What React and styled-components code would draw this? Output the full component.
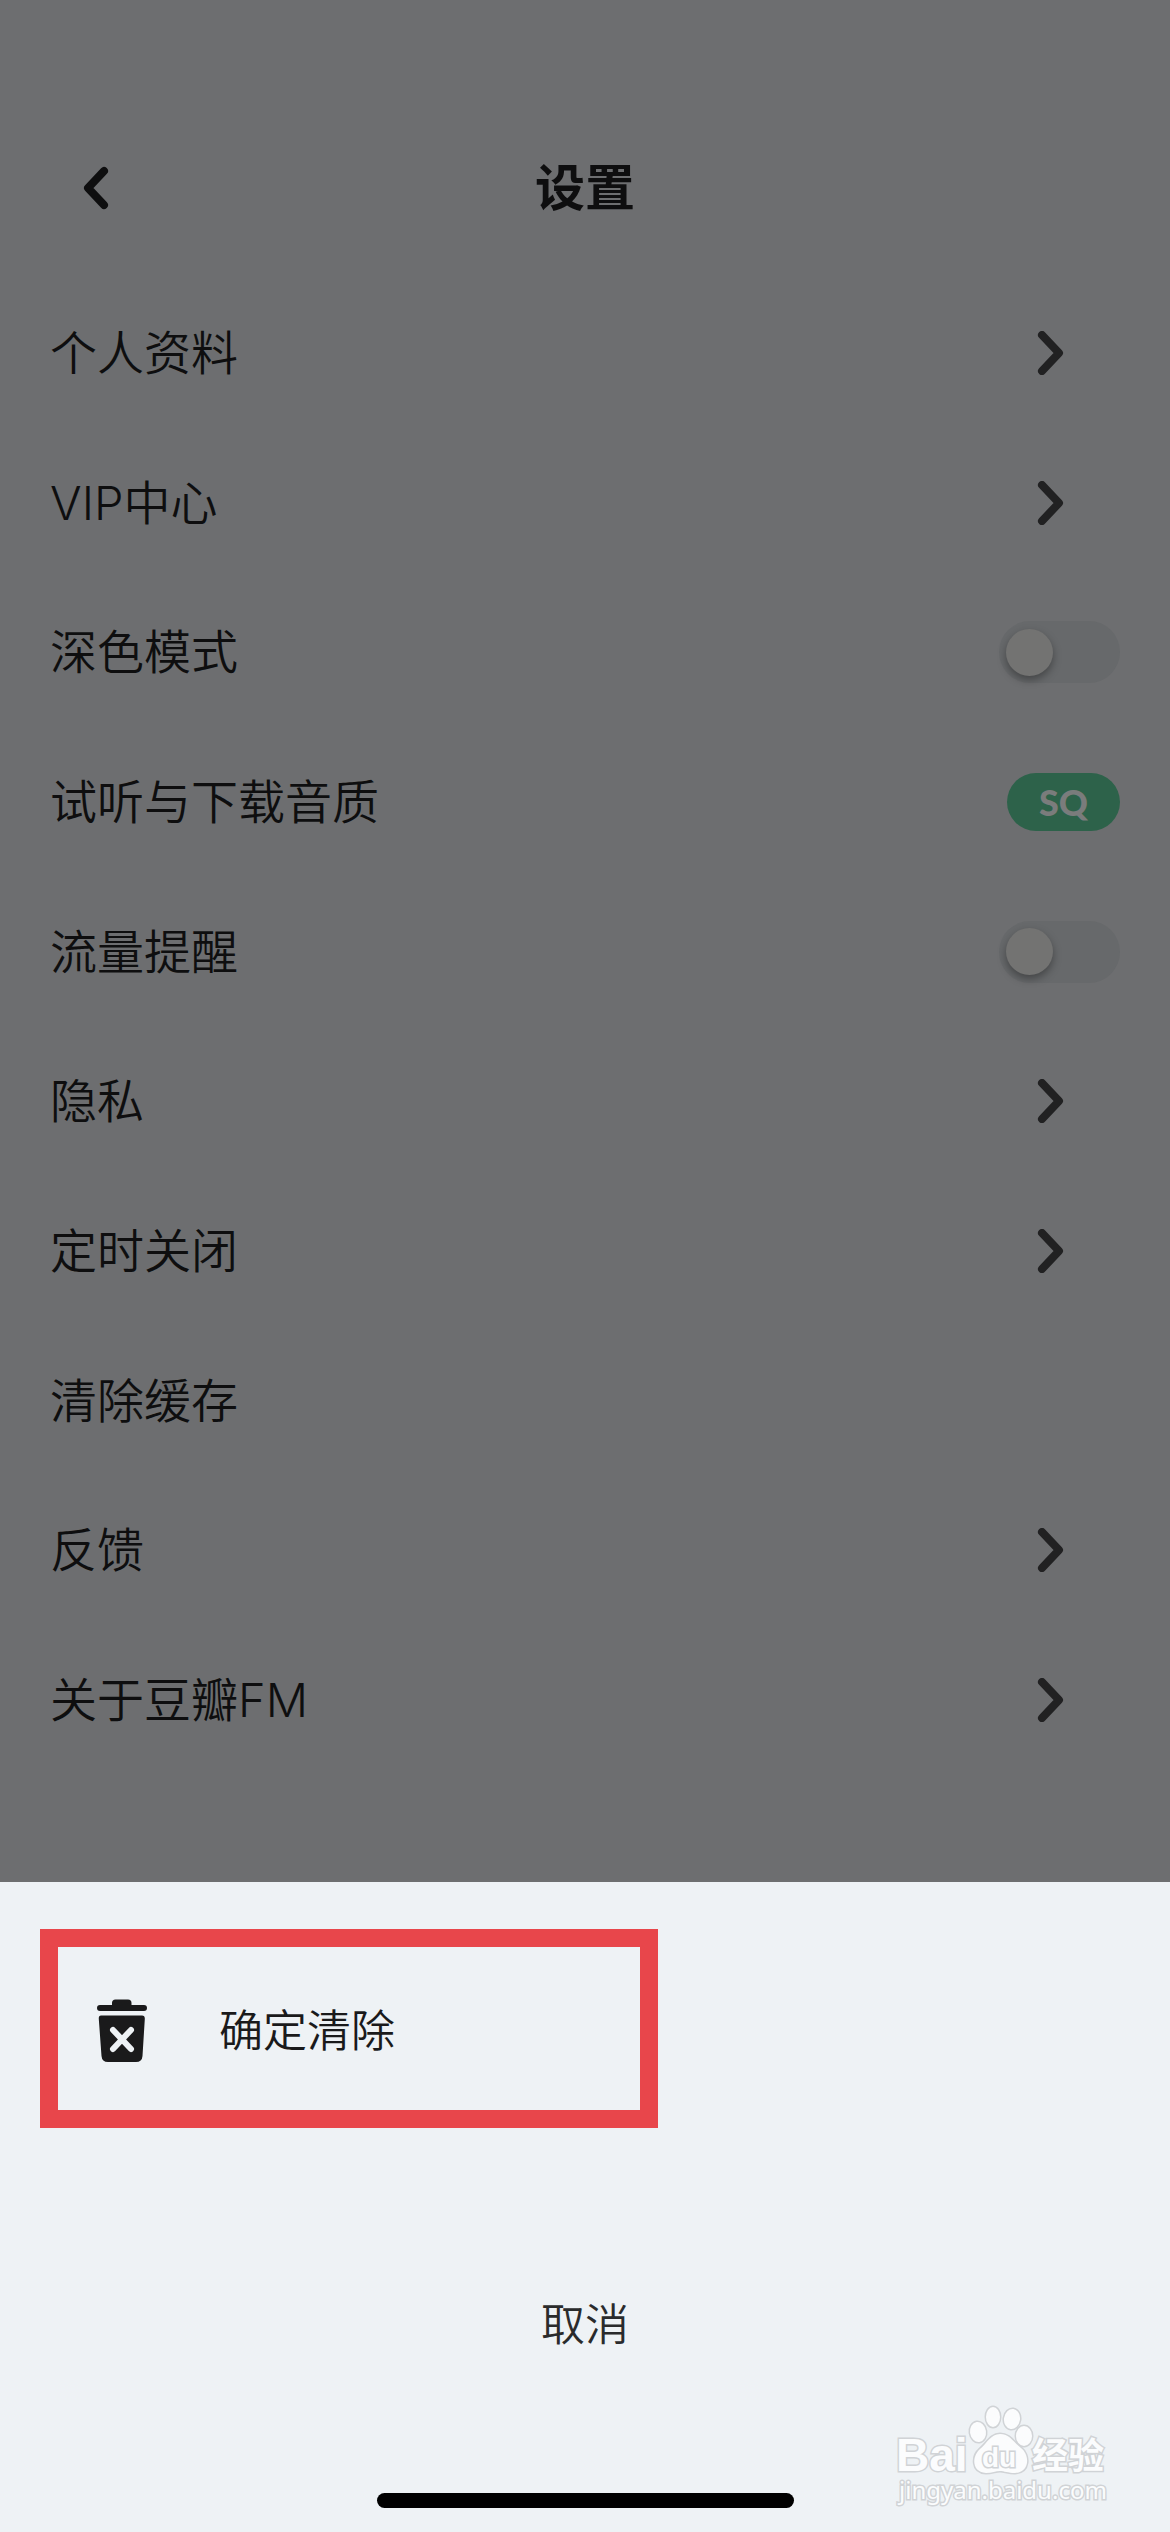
import React from "react";
import styled, { createGlobalStyle } from "styled-components";

const GlobalStyle = createGlobalStyle`
  *, *::before, *::after { box-sizing: border-box; }
  body {
    margin: 0;
    background: #eef2f5;
    font-family: Inter, "Noto Sans CJK SC", sans-serif;
    font-weight: 350;
  }
  button, input { font: inherit; color: inherit; }
`;

const Screen = styled.div`
  display: flex;
  flex-direction: column;
  min-height: 100vh;
`;

const Settings = styled.main`
  flex: 1;
  display: flex;
  flex-direction: column;
  padding: 98px 50px 107px;
  background: #6d6e70;
  color: #0e0e0f;
`;

const Header = styled.header`
  display: grid;
  grid-template-columns: 92px 1fr 92px;
  align-items: center;
  height: 180px;
`;

const PlainButton = styled.button`
  display: flex;
  align-items: center;
  padding: 0;
  border: 0;
  background: none;
  text-align: left;
  cursor: pointer;
`;

const BackButton = styled(PlainButton)`
  justify-content: center;
  height: 92px;
`;

const Title = styled.h1`
  margin: 0;
  text-align: center;
  font-size: 50px;
  font-weight: 600;
  line-height: 72px;
`;

const List = styled.ul`
  flex: 1;
  display: flex;
  flex-direction: column;
  margin: 0;
  padding: 0;
  list-style: none;
`;

const Item = styled.li`
  flex: 1;
  display: flex;
  min-height: 120px;
  font-size: 47px;
  line-height: 68px;
`;

const RowButton = styled(PlainButton)`
  flex: 1;
  justify-content: space-between;
  padding-right: ${(p) => (p.$inset ? "56px" : "0")};
`;

const RowLabel = styled.label`
  flex: 1;
  display: flex;
  align-items: center;
  justify-content: space-between;
  cursor: pointer;
`;

const Switch = styled.input`
  appearance: none;
  display: flex;
  align-items: center;
  width: 121px;
  height: 62px;
  margin: 0;
  padding: 0 7px;
  border-radius: 31px;
  background: #67696b;
  cursor: pointer;

  &::before {
    content: "";
    width: 47px;
    height: 47px;
    border-radius: 50%;
    background: #737372;
    box-shadow: 0 4px 8px rgba(0, 0, 0, 0.35);
  }

  &:checked {
    justify-content: flex-end;
    background: #2e6149;
  }
`;

const Badge = styled.span`
  display: flex;
  align-items: center;
  justify-content: center;
  width: 113px;
  height: 58px;
  border-radius: 29px;
  background: #2d624a;
  color: #7a7c7c;
  font-family: Lato, sans-serif;
  font-size: 36px;
  font-weight: 900;
  line-height: 58px;
`;

const Sheet = styled.section`
  position: relative;
  display: flex;
  flex-direction: column;
  padding: 47px 40px 24px;
  background: #eef2f5;
  color: #1a1a1b;
  font-size: 44px;
  line-height: 64px;
`;

const ConfirmButton = styled(PlainButton)`
  gap: 72px;
  width: 618px;
  max-width: 100%;
  height: 199px;
  padding: 4px 39px 0;
  border: 18px solid #e8464b;
`;

const CancelButton = styled(PlainButton)`
  justify-content: center;
  height: 120px;
  margin: 137px 0 108px;
  color: #2a2b2c;
`;

const HomeIndicator = styled.div`
  align-self: center;
  width: 417px;
  height: 15px;
  border-radius: 8px;
  background: #000;
`;

const Watermark = styled.svg`
  position: absolute;
  right: 55px;
  bottom: 20px;
  pointer-events: none;

  text, ellipse, path {
    fill: #fbfcfd;
    stroke: #d0d3d6;
    stroke-width: 3px;
    paint-order: stroke;
  }
`;

function BackIcon() {
  return (
    <svg width="26" height="44" viewBox="0 0 26 44" fill="none" stroke="currentColor"
      strokeWidth="8" strokeLinecap="round" strokeLinejoin="round" aria-hidden="true">
      <path d="M21 5 L5 22 L21 39" />
    </svg>
  );
}

function ChevronIcon() {
  return (
    <svg width="28" height="44" viewBox="0 0 28 44" fill="none" stroke="#212122"
      strokeWidth="8" strokeLinecap="round" strokeLinejoin="round" aria-hidden="true">
      <path d="M6 4 L23 22 L6 40" />
    </svg>
  );
}

function TrashIcon() {
  return (
    <svg width="50" height="64" viewBox="0 0 50 64" aria-hidden="true">
      <path
        fill="#1a1a1b"
        d="M3 6 H15 V4 Q15 0.500 18.500 0.500 H31 Q34.500 0.500 34.500 4 V6 H47 Q50 6 50 9 Q50 12 47 12 H3 Q0 12 0 9 Q0 6 3 6 Z"
      />
      <path
        fill="#1a1a1b"
        d="M4 16.500 H45 Q48 16.500 47.800 20 L45.500 57 Q45 63 39 63 H11 Q5 63 4.500 57 L1.800 20 Q1.500 16.500 4 16.500 Z"
      />
      <path d="M16 31 L34 50 M34 31 L16 50" stroke="#eef2f5" strokeWidth="6" strokeLinecap="round" />
    </svg>
  );
}

function BaiduMark() {
  return (
    <Watermark width="220" height="110" viewBox="0 0 220 110" role="img" aria-label="Baidu 经验">
      <text x="1" y="69" fontFamily="Liberation Sans, sans-serif" fontSize="46" fontWeight="700">Bai</text>
      <ellipse cx="83" cy="30" rx="8" ry="10" transform="rotate(-8 83 30)" />
      <ellipse cx="98" cy="15" rx="7" ry="10" />
      <ellipse cx="117" cy="17" rx="8" ry="10" transform="rotate(8 117 17)" />
      <ellipse cx="129" cy="34" rx="8" ry="10" />
      <path d="M105 32 C115 32 119 41 126 46 C135 53 135 70 120 71 C113 71 109 69 105 69 C101 69 97 71 91 71 C76 70 77 54 85 47 C92 41 96 32 105 32 Z" />
      <text x="87" y="65" fontFamily="Liberation Sans, sans-serif" fontSize="28" fontWeight="700">du</text>
      <text x="137" y="67" fontFamily="Noto Sans CJK SC, sans-serif" fontSize="36" fontWeight="700">经验</text>
      <text x="4" y="97" fontFamily="Noto Sans, sans-serif" fontSize="24" fontWeight="400">jingyan.baidu.com</text>
    </Watermark>
  );
}

const items = [
  { label: "个人资料", kind: "link" },
  { label: "VIP中心", kind: "link" },
  { label: "深色模式", kind: "switch" },
  { label: "试听与下载音质", kind: "badge", value: "SQ" },
  { label: "流量提醒", kind: "switch" },
  { label: "隐私", kind: "link" },
  { label: "定时关闭", kind: "link" },
  { label: "清除缓存", kind: "action" },
  { label: "反馈", kind: "link" },
  { label: "关于豆瓣FM", kind: "link" },
];

function SettingsItem({ label, kind, value }) {
  if (kind === "switch") {
    return (
      <Item>
        <RowLabel>
          {label}
          <Switch type="checkbox" />
        </RowLabel>
      </Item>
    );
  }
  return (
    <Item>
      <RowButton type="button" $inset={kind === "link"}>
        {label}
        {kind === "link" && <ChevronIcon />}
        {kind === "badge" && <Badge>{value}</Badge>}
      </RowButton>
    </Item>
  );
}

export default function App() {
  return (
    <>
      <GlobalStyle />
      <Screen>
        <Settings>
          <Header>
            <BackButton type="button" aria-label="返回">
              <BackIcon />
            </BackButton>
            <Title>设置</Title>
          </Header>
          <List>
            {items.map((item) => (
              <SettingsItem key={item.label} {...item} />
            ))}
          </List>
        </Settings>
        <Sheet>
          <ConfirmButton type="button">
            <TrashIcon />
            确定清除
          </ConfirmButton>
          <CancelButton type="button">取消</CancelButton>
          <HomeIndicator />
          <BaiduMark />
        </Sheet>
      </Screen>
    </>
  );
}
